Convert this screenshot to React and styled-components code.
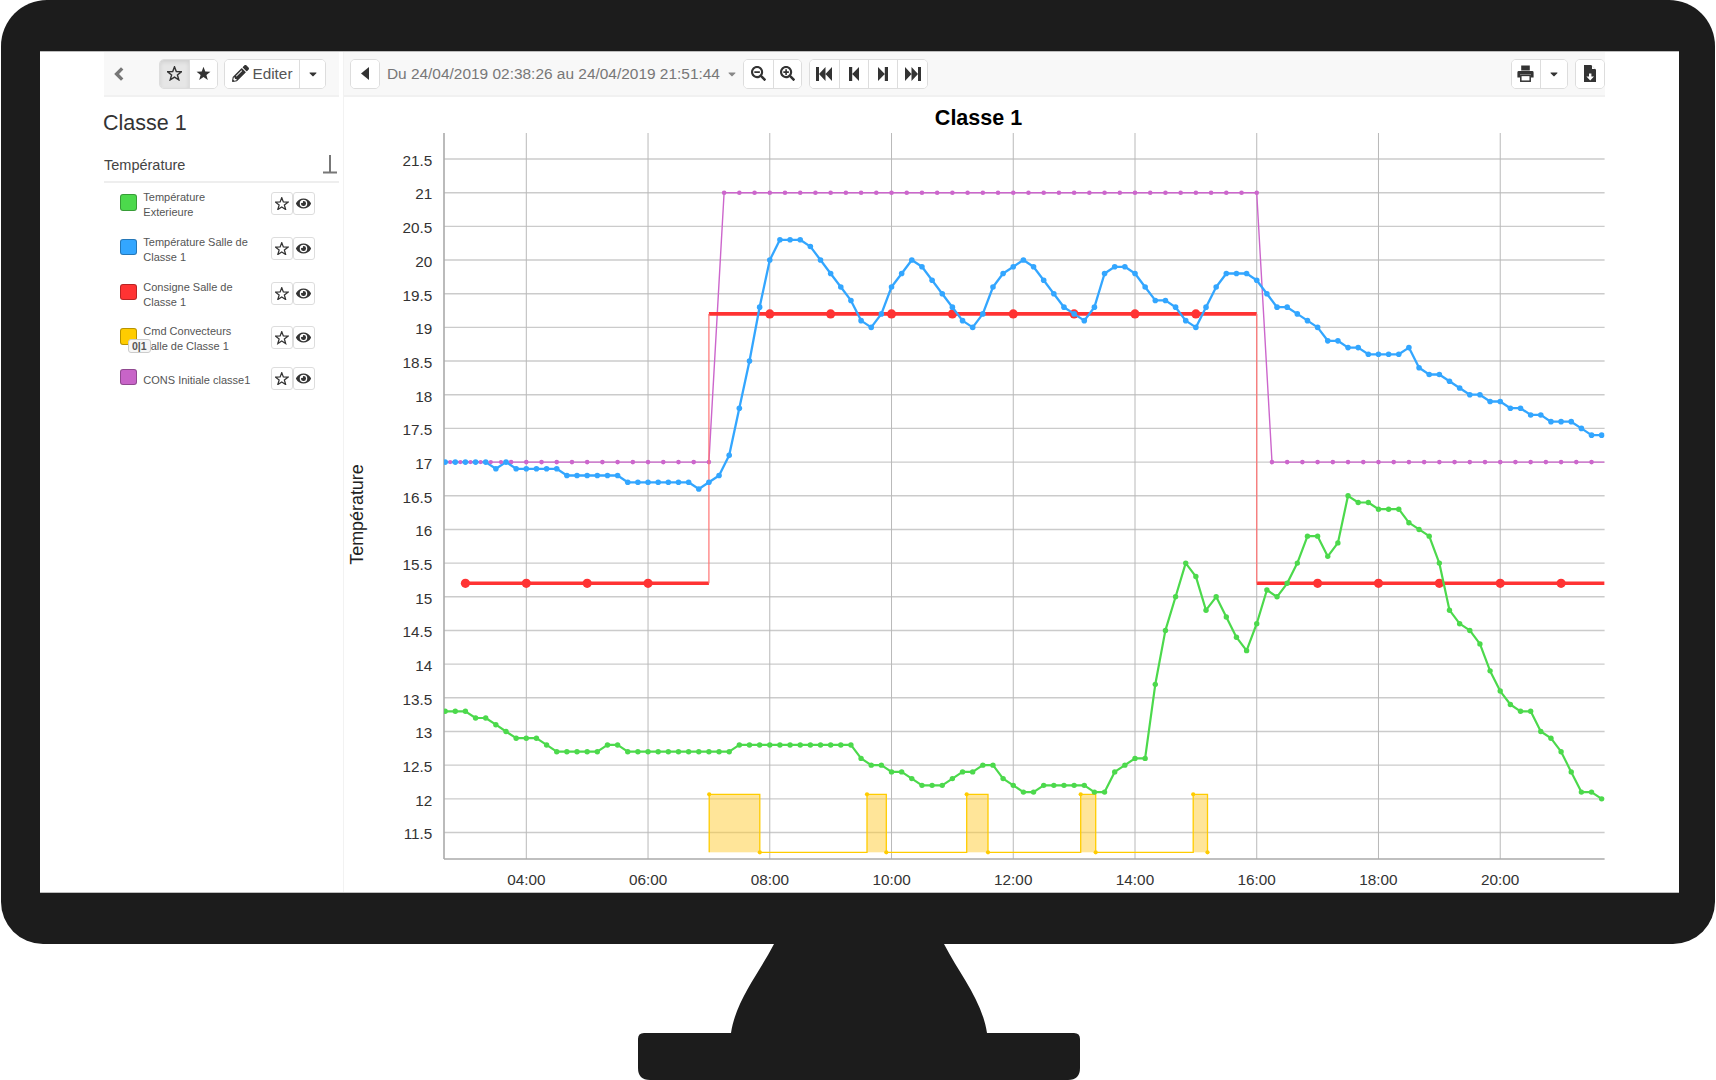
import React from 'react';
import styled, { createGlobalStyle } from 'styled-components';
import { FaPencilAlt, FaCaretDown, FaSearchMinus, FaSearchPlus, FaEye } from 'react-icons/fa';

const Global = createGlobalStyle`
  html, body { margin: 0; padding: 0; background: #fff; }
  body { font-family: "Liberation Sans", Arial, sans-serif; width: 1716px; height: 1080px; overflow: hidden; }
`;

const Page = styled.div`
  width: 1716px;
  height: 1080px;
  display: flex;
  flex-direction: column;
  background: #fff;
`;
const Monitor = styled.div`
  box-sizing: border-box;
  width: 1714px;
  height: 944px;
  margin: 0 1px;
  padding: 51px 36px 51px 38.5px;
  background: #1c1c1c;
  border-radius: 46px 46px 42px 42px;
`;
const Screen = styled.div`
  box-sizing: border-box;
  height: 842px;
  display: flex;
  padding: 0 74px 0 64.5px;
  background: #fff;
  border-top: 1px solid #bdbdbd;
  border-bottom: 1px solid #bdbdbd;
`;
const Sidebar = styled.aside`
  box-sizing: border-box;
  width: 240px;
  padding-right: 4px;
  border-right: 1px solid #f2f2f2;
  flex: none;
`;
const Main = styled.main`
  flex: 1;
  min-width: 0;
  display: flex;
  flex-direction: column;
`;
const Toolbar = styled.div`
  box-sizing: border-box;
  height: 45px;
  display: flex;
  align-items: center;
  background: #f8f8f8;
  border-bottom: 2px solid #f1f1f1;
  padding-left: ${(p) => p.$pad}px;
`;
const BackLink = styled.span`
  width: 45px;
  flex: none;
  display: flex;
  align-items: center;
`;
const Group = styled.div`
  display: flex;
  height: 30px;
  box-sizing: border-box;
  border: 1px solid #ddd;
  border-radius: 5px;
  background: #fff;
  overflow: hidden;
  flex: none;
  margin-left: ${(p) => p.$ml || 0}px;
`;
const Btn = styled.span`
  box-sizing: border-box;
  width: ${(p) => p.$w}px;
  display: flex;
  align-items: center;
  justify-content: center;
  gap: 4px;
  color: ${(p) => (p.$muted ? '#555' : '#333')};
  font-size: ${(p) => p.$fs || 15}px;
  background: ${(p) => (p.$active ? '#e6e6e6' : '#fff')};
  box-shadow: ${(p) => (p.$active ? 'inset 0 2px 4px rgba(0,0,0,.1)' : 'none')};
  & + & { border-left: 1px solid #ddd; }
`;
const PencilWrap = styled.span`
  display: flex;
  color: #333;
  font-size: 17px;
`;
const DateLabel = styled.div`
  box-sizing: border-box;
  width: 363.4px;
  flex: none;
  padding-left: 7.4px;
  display: flex;
  align-items: center;
  gap: 6px;
  font-size: 15.45px;
  color: #777;
  white-space: nowrap;
  svg { font-size: 12px; color: #888; }
`;
const Spacer = styled.div`
  flex: 1;
`;
const Title = styled.h1`
  margin: 0 0 0 -1px;
  height: 50px;
  line-height: 52px;
  font-size: 21.5px;
  font-weight: 400;
  color: #333;
`;
const SectionHead = styled.div`
  box-sizing: border-box;
  height: 36px;
  display: flex;
  align-items: center;
  justify-content: space-between;
  padding: 2px 2px 0 0;
  border-bottom: 2px solid #eeeeee;
  font-size: 14.5px;
  color: #444;
`;
const Legend = styled.div`
  padding: 9px 0 0 16px;
`;
const Row = styled.div`
  position: relative;
  display: grid;
  grid-template-columns: 17px 110px 1fr;
  column-gap: 6.3px;
  height: ${(p) => p.$h}px;
`;
const Swatch = styled.span`
  box-sizing: border-box;
  width: 17px;
  height: 16.5px;
  margin-top: 2px;
  border-radius: 3px;
  border: 1px solid rgba(0, 0, 0, 0.28);
  background: ${(p) => p.$c};
`;
const Label = styled.div`
  font-size: 11px;
  line-height: 15.4px;
  color: #555;
  margin-top: ${(p) => (p.$single ? 6.4 : -2.2)}px;
`;
const RowBtns = styled.div`
  display: flex;
  gap: 0.6px;
  margin-left: 11.6px;
`;
const MiniBtn = styled.span`
  box-sizing: border-box;
  width: 21.4px;
  height: 23.4px;
  display: flex;
  align-items: center;
  justify-content: center;
  border: 1px solid #ddd;
  border-radius: 3px;
  background: #fff;
  color: #333;
  font-size: 15px;
`;
const Badge = styled.span`
  position: absolute;
  left: 8px;
  top: 13.3px;
  box-sizing: border-box;
  width: 22.7px;
  height: 14px;
  border: 1px solid #ccc;
  border-radius: 3px;
  background: #f6f6f6;
  font-size: 10.5px;
  font-weight: 700;
  line-height: 12px;
  text-align: center;
  color: #555;
`;
const ChartSvg = styled.svg`
  display: block;
  width: 1261px;
  height: 794px;
  font-family: "Liberation Sans", Arial, sans-serif;
`;
const StandSvg = styled.svg`
  display: block;
  width: 1716px;
  height: 136px;
`;

/* ---------- toolbar drawings ---------- */
const STAR = '8,0.8 9.9,5.9 15.4,6.1 11.1,9.5 12.6,14.8 8,11.8 3.4,14.8 4.9,9.5 0.6,6.1 6.1,5.9';
const Star = ({ size = 15, solid }) => (
  <svg width={size} height={size} viewBox="0 0 16 16" aria-hidden="true">
    <polygon
      points={STAR}
      fill={solid ? '#333' : 'none'}
      stroke={solid ? 'none' : '#333'}
      strokeWidth="1.5"
      strokeLinejoin="miter"
    />
  </svg>
);
const Chevron = () => (
  <svg width="10" height="14" viewBox="0 0 10 14" aria-hidden="true">
    <polyline points="8.2,1.4 2.6,7 8.2,12.6" fill="none" stroke="#777" strokeWidth="3.4" />
  </svg>
);
const TriLeft = () => (
  <svg width="8" height="13" viewBox="0 0 8 13" aria-hidden="true">
    <polygon points="8,0 0,6.5 8,13" fill="#333" />
  </svg>
);
const Step = ({ flip }) => (
  <svg width="10" height="14" viewBox="0 0 10 14" aria-hidden="true" transform={flip ? 'scale(-1 1)' : undefined}>
    <path d="M0 0h3.2v14H0zM3.2 7 10 0v14z" fill="#333" />
  </svg>
);
const Fast = ({ flip }) => (
  <svg width="16" height="14" viewBox="0 0 16 14" aria-hidden="true" transform={flip ? 'scale(-1 1)' : undefined}>
    <path d="M0 0h3v14H0zM3 7l6.5-7v14zM9.5 7 16 0v14z" fill="#333" />
  </svg>
);
const Printer = () => (
  <svg width="17" height="17" viewBox="0 0 17 17" aria-hidden="true">
    <path d="M4.2 0.4h8.6v5H4.2zM1.8 6h13.4q1.4 0 1.4 1.4v5.2H14v-3H3v3H0.4V7.4Q0.4 6 1.8 6z" fill="#333" />
    <rect x="3.8" y="10.4" width="9.4" height="5.8" fill="#fff" stroke="#333" strokeWidth="1.5" />
  </svg>
);
const ExportDoc = () => (
  <svg width="12" height="17" viewBox="0 0 12 17" aria-hidden="true">
    <path d="M0 0h7.2L12 4.8V17H0z" fill="#333" />
    <path d="M8 0.6V4h3.4z" fill="#fff" />
    <path d="M5 8.4h2.4v3H10l-3.8 4-3.8-4H5z" fill="#fff" />
  </svg>
);
const AxisIcon = () => (
  <svg width="14" height="20" viewBox="0 0 14 20" aria-hidden="true">
    <path d="M7 0v17.5M0 17.5h14" fill="none" stroke="#777" strokeWidth="2" />
  </svg>
);

/* ---------- data ---------- */
const rep = (v, n) => Array(n).fill(v);
const BLUE = [
  ...rep(17, 5), 16.9, 17, ...rep(16.9, 5), ...rep(16.8, 6), ...rep(16.7, 7), 16.6, 16.7, 16.8, 17.1, 17.8, 18.5, 19.3,
  20, 20.3, 20.3, 20.3, 20.2, 20, 19.8, 19.6, 19.4, 19.1, 19, 19.2, 19.6, 19.8, 20, 19.9, 19.7, 19.5,
  19.3, 19.1, 19, 19.2, 19.6, 19.8, 19.9, 20, 19.9, 19.7, 19.5, 19.3, 19.2, 19.1, 19.3, 19.8, 19.9, 19.9,
  19.8, 19.6, 19.4, 19.4, 19.3, 19.1, 19, 19.3, 19.6, 19.8, 19.8, 19.8, 19.7, 19.5, 19.3, 19.3, 19.2, 19.1,
  19, 18.8, 18.8, 18.7, 18.7, 18.6, 18.6, 18.6, 18.6, 18.7, 18.4, 18.3, 18.3, 18.2, 18.1, 18, 18, 17.9,
  17.9, 17.8, 17.8, 17.7, 17.7, 17.6, 17.6, 17.6, 17.5, 17.4, 17.4,
];
const GREEN = [
  ...rep(13.3, 3), 13.2, 13.2, 13.1, 13, ...rep(12.9, 3), 12.8, ...rep(12.7, 5), 12.8, 12.8, ...rep(12.7, 11), ...rep(12.8, 12),
  12.6, 12.5, 12.5, 12.4, 12.4, 12.3, 12.2, 12.2, 12.2, 12.3, 12.4, 12.4, 12.5, 12.5, 12.3, 12.2, 12.1, 12.1,
  ...rep(12.2, 5), 12.1, 12.1, 12.4, 12.5, 12.6, 12.6, 13.7, 14.5, 15, 15.5, 15.3, 14.8, 15, 14.7, 14.4, 14.2,
  14.6, 15.1, 15, 15.2, 15.5, 15.9, 15.9, 15.6, 15.8, 16.5, 16.4, 16.4, 16.3, 16.3, 16.3, 16.1, 16, 15.9, 15.5,
  14.8, 14.6, 14.5, 14.3, 13.9, 13.6, 13.4, 13.3, 13.3, 13, 12.9, 12.7, 12.4, 12.1, 12.1, 12,
];

const Y = (v) => 159 + (21.5 - v) * 67.35;
const X = (h) => 526.3 + (h - 4) * 60.87;
const LEFT = 444;
const RIGHT = 1604.6;
const TOP = 133;
const BOTTOM = 859;
const pts = (list) => list.map(([x, y]) => `${x.toFixed(1)},${y.toFixed(1)}`).join(' ');
const sample = (vals) => vals.map((v, i) => [X(2 + 40 / 60 + i / 6), Y(v)]);

const YTICKS = Array.from({ length: 21 }, (_, i) => 21.5 - i * 0.5);
const XTICKS = [4, 6, 8, 10, 12, 14, 16, 18, 20];

const denseDots = Array.from({ length: 13 }, (_, i) => [X(2 + 40 / 60 + i * 5 / 60), Y(17)]);
const purpleDots = [
  ...Array.from({ length: 14 }, (_, i) => [3.75 + i * 0.25, 17]),
  ...Array.from({ length: 36 }, (_, i) => [7.25 + i * 0.25, 21]),
  ...Array.from({ length: 22 }, (_, i) => [16.25 + i * 0.25, 17]),
].map(([h, v]) => [X(h), Y(v)]);
const purpleLine = [[LEFT, Y(17)], [X(7), Y(17)], [X(7.25), Y(21)], [X(16), Y(21)], [X(16.25), Y(17)], [RIGHT, Y(17)]];

const redDots = [3, 4, 5, 6, 8, 9, 10, 11, 12, 13, 14, 15, 17, 18, 19, 20, 21];

const YT = 794.3;
const YB = 852.3;
const HEATS = [[709.2, 759.8], [867, 886.3], [966.7, 988], [1080.7, 1095.7], [1193.2, 1207.5]];
const yellowLine = HEATS.flatMap(([a, b]) => [[a, YB], [a, YT], [b, YT], [b, YB]]);

function Chart() {
  return (
    <ChartSvg viewBox="344 97 1261 794">
      <defs>
        <clipPath id="plot"><rect x={LEFT} y={TOP} width={RIGHT - LEFT} height={BOTTOM - TOP} /></clipPath>
      </defs>
      <text x="978.5" y="125" textAnchor="middle" fontSize="21.5" fontWeight="700" fill="#000">Classe 1</text>
      {YTICKS.map((v) => (
        <g key={v}>
          <line x1={LEFT} x2={RIGHT} y1={Y(v)} y2={Y(v)} stroke="#cbcbcb" strokeWidth="1.4" />
          <text x="432.3" y={Y(v) + 6.8} textAnchor="end" fontSize="15.3" fill="#333">{String(v)}</text>
        </g>
      ))}
      {XTICKS.map((h) => (
        <g key={h}>
          <line x1={X(h)} x2={X(h)} y1={TOP} y2={BOTTOM} stroke="#b9b9b9" strokeWidth="1" />
          <text x={X(h)} y="884.6" textAnchor="middle" fontSize="15.3" fill="#333">{`${String(h).padStart(2, '0')}:00`}</text>
        </g>
      ))}
      <line x1={LEFT} x2={LEFT} y1={TOP} y2={BOTTOM} stroke="#aaa" strokeWidth="1.6" />
      <line x1={LEFT} x2={RIGHT} y1={BOTTOM} y2={BOTTOM} stroke="#aaa" strokeWidth="1.6" />
      <text transform="translate(362.5 514.5) rotate(-90)" textAnchor="middle" fontSize="17.9" fill="#222">Température</text>
      <g clipPath="url(#plot)">
        {HEATS.map(([a, b]) => (
          <rect key={a} x={a} y={YT} width={b - a} height={YB - YT} fill="#ffcc33" fillOpacity="0.5" />
        ))}
        <polyline points={pts(yellowLine)} fill="none" stroke="#ffcc00" strokeWidth="1.3" />
        {HEATS.flatMap(([a, b]) => [[a, YT], [b, YB]]).map(([x, y]) => (
          <circle key={`${x}`} cx={x} cy={y} r="2.1" fill="#ffcc00" />
        ))}

        <polyline points={pts(purpleLine)} fill="none" stroke="#cc66cc" strokeWidth="1.4" />
        {purpleDots.map(([x, y], i) => <circle key={i} cx={x} cy={y} r="2.3" fill="#cc66cc" />)}

        <line x1={X(3)} x2={X(7)} y1={Y(15.2)} y2={Y(15.2)} stroke="#ff3333" strokeWidth="3.6" />
        <line x1={X(7)} x2={X(16)} y1={Y(19.2)} y2={Y(19.2)} stroke="#ff3333" strokeWidth="3.6" />
        <line x1={X(16)} x2={RIGHT} y1={Y(15.2)} y2={Y(15.2)} stroke="#ff3333" strokeWidth="3.6" />
        <line x1={X(7)} x2={X(7)} y1={Y(15.2)} y2={Y(19.2)} stroke="#ff7373" strokeWidth="1.2" />
        <line x1={X(16)} x2={X(16)} y1={Y(19.2)} y2={Y(15.2)} stroke="#ff7373" strokeWidth="1.2" />
        {redDots.map((h) => (
          <circle key={h} cx={X(h)} cy={Y(h < 7 || h > 16 ? 15.2 : 19.2)} r="4.6" fill="#ff3333" />
        ))}

        <polyline points={pts(sample(GREEN))} fill="none" stroke="#4cd94c" strokeWidth="2.2" strokeLinejoin="round" />
        {sample(GREEN).map(([x, y], i) => <circle key={i} cx={x} cy={y} r="2.7" fill="#4cd94c" />)}
        <polyline points={pts(sample(BLUE))} fill="none" stroke="#33a6ff" strokeWidth="2.3" strokeLinejoin="round" />
        {sample(BLUE).map(([x, y], i) => <circle key={i} cx={x} cy={y} r="2.8" fill="#33a6ff" />)}
        {denseDots.filter((_, i) => i % 2 === 1).map(([x, y], i) => (
          <circle key={i} cx={x} cy={y} r="2.1" fill="#cc66cc" />
        ))}
      </g>
    </ChartSvg>
  );
}

const LEGEND = [
  { c: '#4cd94c', t: 'Température Exterieure', h: 44.7 },
  { c: '#33a6ff', t: 'Température Salle de Classe 1', h: 45 },
  { c: '#ff3333', t: 'Consigne Salle de Classe 1', h: 44.4 },
  { c: '#ffcc00', t: 'Cmd Convecteurs Salle de Classe 1', h: 40.6, badge: true },
  { c: '#c864c8', t: 'CONS Initiale classe1', h: 40, single: true },
];

export default function App() {
  return (
    <Page>
      <Global />
      <Monitor>
        <Screen>
          <Sidebar>
            <Toolbar $pad={10}>
              <BackLink><Chevron /></BackLink>
              <Group>
                <Btn $w={29} $active><Star /></Btn>
                <Btn $w={28}><Star solid /></Btn>
              </Group>
              <Group $ml={6}>
                <Btn $w={74} $muted $fs={15.3}>
                  <PencilWrap><FaPencilAlt /></PencilWrap>
                  Editer
                </Btn>
                <Btn $w={26} $fs={12}><FaCaretDown /></Btn>
              </Group>
            </Toolbar>
            <Title>Classe 1</Title>
            <SectionHead>
              Température
              <AxisIcon />
            </SectionHead>
            <Legend>
              {LEGEND.map((l) => (
                <Row key={l.t} $h={l.h}>
                  <Swatch $c={l.c} />
                  <Label $single={l.single}>{l.t}</Label>
                  <RowBtns>
                    <MiniBtn><Star size={13.5} /></MiniBtn>
                    <MiniBtn><FaEye /></MiniBtn>
                  </RowBtns>
                  {l.badge && <Badge>0|1</Badge>}
                </Row>
              ))}
            </Legend>
          </Sidebar>
          <Main>
            <Toolbar $pad={5.5}>
              <Group>
                <Btn $w={28}><TriLeft /></Btn>
              </Group>
              <DateLabel>
                Du 24/04/2019 02:38:26 au 24/04/2019 21:51:44
                <FaCaretDown />
              </DateLabel>
              <Group>
                <Btn $w={28.75} $fs={15}><FaSearchMinus /></Btn>
                <Btn $w={28.75} $fs={15}><FaSearchPlus /></Btn>
              </Group>
              <Group $ml={6.5}>
                <Btn $w={29.2}><Fast /></Btn>
                <Btn $w={29.2}><Step /></Btn>
                <Btn $w={29.2}><Step flip /></Btn>
                <Btn $w={29.2}><Fast flip /></Btn>
              </Group>
              <Spacer />
              <Group>
                <Btn $w={28.5}><Printer /></Btn>
                <Btn $w={26.8} $fs={12}><FaCaretDown /></Btn>
              </Group>
              <Group $ml={7}>
                <Btn $w={28}><ExportDoc /></Btn>
              </Group>
            </Toolbar>
            <Chart />
          </Main>
        </Screen>
      </Monitor>
      <StandSvg viewBox="0 944 1716 136">
        <path
          d="M774 944 C758 975 736 1000 731 1033 H644 Q638 1033 638 1039 V1068 Q638 1080 650 1080 H1068 Q1080 1080 1080 1068 V1039 Q1080 1033 1074 1033 H987 C982 1000 960 975 944 944 Z"
          fill="#1c1c1c"
        />
      </StandSvg>
    </Page>
  );
}
